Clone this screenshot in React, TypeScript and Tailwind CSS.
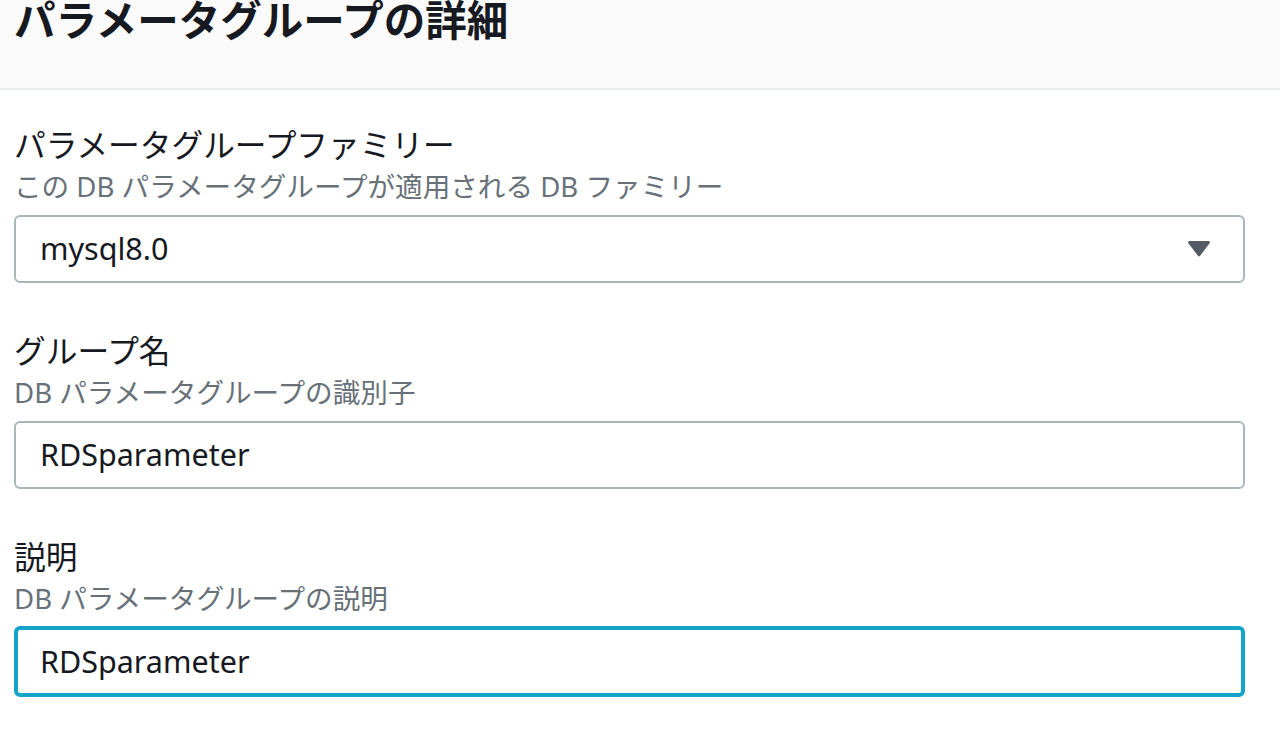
type FieldProps = {
  label: string
  hint: string
  value: string
  select?: boolean
  focused?: boolean
}

function Field({ label, hint, value, select, focused }: FieldProps) {
  const box = focused
    ? 'border-[4px] border-[#14a3c9] h-[71px] mt-[8px] pl-[22px]'
    : 'border-2 border-[#aab7b8] h-[68px] mt-[9px] pl-[24px]'

  return (
    <div className="mb-[47px]">
      <p className="text-[31.7px] leading-[42px] text-[#16191f]">{label}</p>
      <p className="text-[27.6px] leading-[40px] text-[#687078]">{hint}</p>
      <div className={`flex items-center justify-between rounded-[6px] bg-white pr-[32px] ${box}`}>
        <span className="text-[30.5px] text-[#16191f]">{value}</span>
        {select && (
          <svg width="24" height="20" viewBox="0 0 24 20">
            <path d="M2.5 2h19c1.2 0 1.8 1.3 1.1 2.2l-9.5 12.6c-.6.8-1.6.8-2.2 0L1.4 4.2C.7 3.3 1.3 2 2.5 2z" fill="#545b64" />
          </svg>
        )}
      </div>
    </div>
  )
}

export default function App() {
  return (
    <div className="w-[1280px] h-[730px] overflow-hidden bg-white font-['Noto_Sans','Noto_Sans_CJK_JP',sans-serif]">
      <div className="h-[90px] bg-[#fafafa] border-b-2 border-[#eaeded] px-[14px]">
        <h1 className="text-[41.5px] leading-[40px] font-bold text-[#16191f]">パラメータグループの詳細</h1>
      </div>

      <div className="pt-[34px] pl-[14px] w-[1245px]">
        <Field
          label="パラメータグループファミリー"
          hint="この DB パラメータグループが適用される DB ファミリー"
          value="mysql8.0"
          select
        />
        <Field label="グループ名" hint="DB パラメータグループの識別子" value="RDSparameter" />
        <Field label="説明" hint="DB パラメータグループの説明" value="RDSparameter" focused />
      </div>
    </div>
  )
}
